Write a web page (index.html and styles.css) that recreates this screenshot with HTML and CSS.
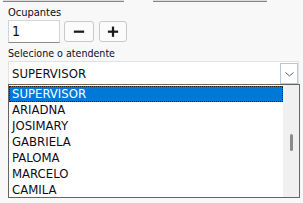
FILE: index.html
```html
<!DOCTYPE html>
<html>
<head>
<meta charset="utf-8">
<link rel="stylesheet" href="styles.css">
</head>
<body>
<div class="page">
  <div class="top-row">
    <div class="top-field f1"></div>
    <div class="top-field f2"></div>
  </div>
  <div class="small-label">Ocupantes</div>
  <div class="occ-row">
    <div class="num-input">1</div>
    <button class="step minus" type="button">
      <svg width="30" height="21" viewBox="0 0 30 21"><rect x="9.5" y="9.5" width="11" height="2.4" fill="#1a1a1a"/></svg>
    </button>
    <button class="step plus" type="button">
      <svg width="28" height="21" viewBox="0 0 28 21"><rect x="8.5" y="9.5" width="11" height="2.4" fill="#1a1a1a"/><rect x="12.8" y="5.2" width="2.4" height="11" fill="#1a1a1a"/></svg>
    </button>
  </div>
  <div class="label">Selecione o atendente</div>
  <div class="select">
    <span class="select-text">SUPERVISOR</span>
    <span class="arrow-box">
      <svg width="17" height="20" viewBox="0 0 17 20"><path d="M4.5 8.5 L8.5 12 L12.5 8.5" fill="none" stroke="#606060" stroke-width="1"/></svg>
    </span>
  </div>
  <div class="list">
    <div class="items">
      <div class="item selected">SUPERVISOR</div>
      <div class="item">ARIADNA</div>
      <div class="item">JOSIMARY</div>
      <div class="item">GABRIELA</div>
      <div class="item">PALOMA</div>
      <div class="item">MARCELO</div>
      <div class="item">CAMILA</div>
    </div>
    <div class="scrollbar"><div class="thumb"></div></div>
  </div>
</div>
</body>
</html>
```
FILE: styles.css
```css
html, body {
  margin: 0;
  padding: 0;
  background: #f8f8f8;
}
.page {
  width: 303px;
  height: 203px;
  overflow: hidden;
  font-family: "DejaVu Sans Condensed", "DejaVu Sans", sans-serif;
  color: #0c0c1c;
}
.top-row {
  display: flex;
  padding-left: 3px;
  gap: 29px;
}
.top-field {
  height: 1px;
  background: #dcdcdc;
  border-bottom: 1px solid #858585;
}
.f1 { width: 121px; }
.f2 { width: 114px; }
.small-label {
  margin: 5px 0 0 8px;
  font-family: "Liberation Sans Narrow", "DejaVu Sans Condensed", sans-serif;
  font-size: 11px;
  line-height: 12px;
  height: 12px;
}
.occ-row {
  display: flex;
  align-items: center;
  margin: 1px 0 0 8px;
  height: 23px;
}
.num-input {
  box-sizing: border-box;
  width: 52px;
  height: 23px;
  background: #fff;
  border: 1px solid #d4d4d4;
  border-bottom-color: #8a8a8a;
  font-size: 14px;
  line-height: 21px;
  padding-left: 3px;
}
.step {
  box-sizing: border-box;
  height: 21px;
  padding: 0;
  margin: 0;
  border: 1px solid #c9c9c9;
  border-radius: 3px;
  background: #fbfbfb;
  display: flex;
  align-items: center;
  justify-content: center;
}
.step svg { display: block; }
.minus { width: 30px; margin-left: 4px; }
.plus { width: 28px; margin-left: 5px; }
.label {
  margin: 4px 0 0 8px;
  font-size: 10.6px;
  line-height: 13px;
  height: 13px;
}
.select {
  box-sizing: border-box;
  margin: 1px 0 0 8px;
  width: 291px;
  height: 23px;
  background: #fff;
  border: 1px solid #e2e2e2;
  border-bottom: none;
  display: flex;
  justify-content: space-between;
  align-items: flex-end;
}
.select-text {
  font-size: 13px;
  line-height: 16px;
  padding: 0 0 2px 3px;
}
.arrow-box {
  box-sizing: border-box;
  width: 18px;
  height: 21px;
  border: 1px solid #bcc6d0;
  background: #fff;
  margin-right: 0;
}
.arrow-box svg { display: block; }
.list {
  box-sizing: border-box;
  margin-left: 8px;
  width: 292px;
  height: 114px;
  border: 1px solid #656565;
  background: #fff;
  display: flex;
}
.items {
  flex: 1;
  padding-top: 1px;
}
.item {
  height: 16px;
  line-height: 16px;
  font-size: 13px;
  padding-left: 3px;
  white-space: nowrap;
}
.item.selected {
  box-sizing: border-box;
  background: #0078d7;
  color: #fff;
  border: 1px dotted #2b1f0a;
  padding-left: 2px;
  line-height: 14px;
}
.scrollbar {
  width: 16px;
  background: #f0f0f0;
  display: flex;
  justify-content: center;
}
.thumb {
  margin-top: 49px;
  width: 3px;
  height: 17px;
  border-radius: 1.5px;
  background: #8b8b8b;
}
```
